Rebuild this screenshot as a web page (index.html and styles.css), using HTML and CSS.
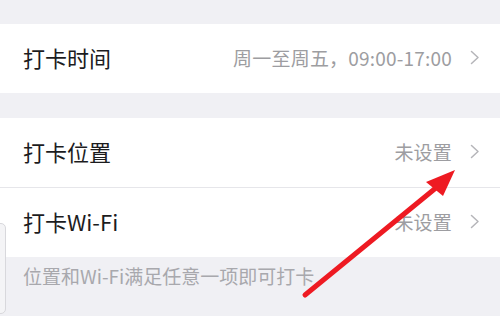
FILE: index.html
```html
<!DOCTYPE html>
<html lang="zh-CN">
<head>
    <meta charset="UTF-8">
    <meta name="viewport" content="width=device-width, initial-scale=1.0">
    <title>打卡设置</title>
    <link rel="stylesheet" href="styles.css">
</head>
<body>
    <div class="page">
        <div class="gap gap-top"></div>

        <div class="group">
            <div class="row">
                <span class="label">打卡时间</span>
                <span class="value">周一至周五，09:00-17:00</span>
                <svg class="chevron" width="10" height="15" viewBox="0 0 10 15"><path d="M1.5 1.5 L8 7.5 L1.5 13.5" fill="none" stroke="#b5b5b9" stroke-width="1.5" stroke-linecap="round" stroke-linejoin="round"/></svg>
            </div>
        </div>

        <div class="gap"></div>

        <div class="group">
            <div class="row">
                <span class="label">打卡位置</span>
                <span class="value">未设置</span>
                <svg class="chevron" width="10" height="15" viewBox="0 0 10 15"><path d="M1.5 1.5 L8 7.5 L1.5 13.5" fill="none" stroke="#b5b5b9" stroke-width="1.5" stroke-linecap="round" stroke-linejoin="round"/></svg>
            </div>
            <div class="divider"></div>
            <div class="row">
                <span class="label">打卡Wi-Fi</span>
                <span class="value">未设置</span>
                <svg class="chevron" width="10" height="15" viewBox="0 0 10 15"><path d="M1.5 1.5 L8 7.5 L1.5 13.5" fill="none" stroke="#b5b5b9" stroke-width="1.5" stroke-linecap="round" stroke-linejoin="round"/></svg>
            </div>
        </div>

        <div class="hint">位置和Wi-Fi满足任意一项即可打卡</div>
        <div class="footer"></div>
    </div>

    <!-- floating side tab on the left edge -->
    <div class="side-tab"></div>

    <!-- red annotation arrow -->
    <svg class="arrow" width="500" height="334" viewBox="0 0 500 334">
        <line x1="305" y1="295" x2="437" y2="187" stroke="#ee1a22" stroke-width="5" stroke-linecap="round"/>
        <polygon points="455,170 426,182 443,196" fill="#ee1a22"/>
    </svg>
</body>
</html>
```

FILE: styles.css
```css
/* General page styling */
body {
    margin: 0;
    padding: 0;
    background-color: #f0f0f4;
    font-family: "Noto Sans CJK SC", "Noto Sans", sans-serif;
    overflow: hidden;
}

.page {
    display: flex;
    flex-direction: column;
    height: 334px;
}

.gap {
    height: 25px;
}

.gap-top {
    height: 24px;
}

.group {
    background-color: #ffffff;
}

/* Setting rows */
.row {
    display: flex;
    align-items: center;
    height: 66px;
    padding: 0 20px 3px 23px;
}

.label {
    flex: 1;
    font-size: 22px;
    color: #1c1c1e;
}

.value {
    font-size: 19px;
    letter-spacing: 0.2px;
    color: #9d9da1;
}

.chevron {
    margin-left: 18px;
}

.divider {
    height: 1px;
    background-color: #e6e6ea;
}

/* Hint below the group */
.hint {
    padding: 7px 23px 28px;
    font-size: 19px;
    line-height: 24px;
    color: #a8a8ad;
}

.footer {
    flex: 1;
    background-color: #ffffff;
}

.side-tab {
    position: absolute;
    left: -8px;
    top: 223px;
    width: 12px;
    height: 89px;
    border: 1px solid #d8d8dc;
    border-radius: 5px;
    background-color: #f4f4f6;
}

.arrow {
    position: absolute;
    top: 0;
    left: 0;
    pointer-events: none;
}
```
